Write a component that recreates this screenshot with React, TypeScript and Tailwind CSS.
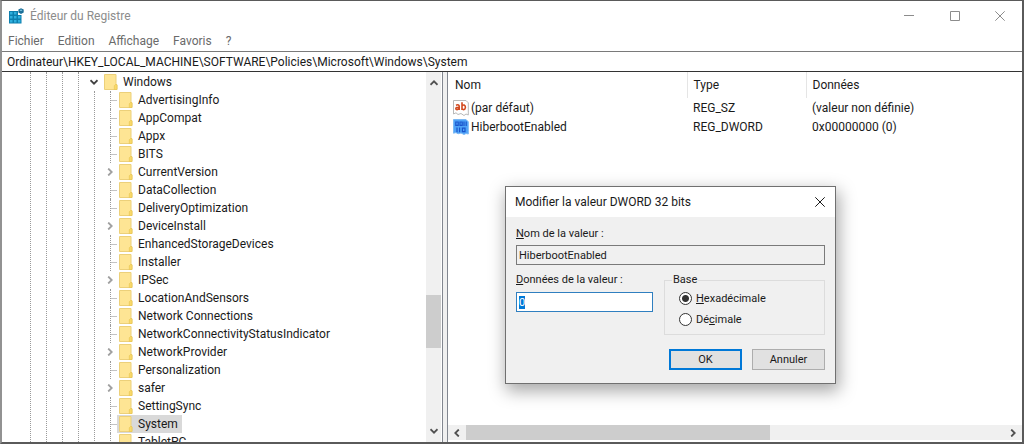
import React, { useEffect, useRef, useState } from 'react';
import clsx from 'clsx';

interface TreeKey {
  name: string;
  expandable?: boolean;
  selected?: boolean;
}

interface RegistryValue {
  name: string;
  type: string;
  data: string;
  kind: 'string' | 'binary';
}

const MENUS = ['Fichier', 'Edition', 'Affichage', 'Favoris', '?'];

const KEYS: TreeKey[] = [
  { name: 'AdvertisingInfo' },
  { name: 'AppCompat' },
  { name: 'Appx' },
  { name: 'BITS' },
  { name: 'CurrentVersion', expandable: true },
  { name: 'DataCollection' },
  { name: 'DeliveryOptimization' },
  { name: 'DeviceInstall', expandable: true },
  { name: 'EnhancedStorageDevices' },
  { name: 'Installer' },
  { name: 'IPSec', expandable: true },
  { name: 'LocationAndSensors' },
  { name: 'Network Connections' },
  { name: 'NetworkConnectivityStatusIndicator' },
  { name: 'NetworkProvider', expandable: true },
  { name: 'Personalization' },
  { name: 'safer', expandable: true },
  { name: 'SettingSync' },
  { name: 'System', selected: true },
  { name: 'TabletPC' },
];

const VALUES: RegistryValue[] = [
  { name: '(par défaut)', type: 'REG_SZ', data: '(valeur non définie)', kind: 'string' },
  { name: 'HiberbootEnabled', type: 'REG_DWORD', data: '0x00000000 (0)', kind: 'binary' },
];

const Chevron: React.FC<{ className?: string }> = ({ className }) => (
  <svg viewBox="0 0 8 8" className={clsx('size-2 fill-none stroke-current', className)} strokeWidth="1.8">
    <path d="M0.5 2.2 4 5.7 7.5 2.2" />
  </svg>
);

const Cross: React.FC = () => (
  <svg viewBox="0 0 10 10" className="size-[10px] fill-none stroke-current">
    <path d="M0.3 0.3 9.7 9.7M9.7 0.3 0.3 9.7" />
  </svg>
);

const FolderIcon: React.FC = () => (
  <svg viewBox="0 0 14 16" className="h-4 w-[14px] shrink-0">
    <path d="M0.5 0.5H12V9.5L13 11V15.5H0.5Z" fill="#fee594" stroke="#ecd07a" />
    <path d="M12 10 10.3 11.8V15.5H13V11Z" fill="#f9d968" stroke="#e6c250" strokeWidth="0.6" />
  </svg>
);

const RegeditIcon: React.FC = () => (
  <svg viewBox="0 0 16 16" className="size-4">
    <path d="M1 3H10V7H13.5V15.5H1Z" fill="#0d7fae" />
    <path d="M2 4H4.5V6.5H2ZM6 4H8.5V6.5H6ZM2 8H4.5V10.5H2ZM6 8H8.5V10.5H6ZM10 8H12.5V10.5H10ZM2 12H4.5V14.5H2ZM6 12H8.5V14.5H6ZM10 12H12.5V14.5H10Z" fill="#2fb0de" />
    <path d="M13 0.3 15.7 1.6V4.6L13 6 10.4 4.6V1.6Z" fill="#1c6f98" />
    <path d="M13 1.4 14.5 2.2 13 3.1 11.5 2.2Z" fill="#8fd4ee" />
  </svg>
);

const ValueIcon: React.FC<{ kind: RegistryValue['kind'] }> = ({ kind }) =>
  kind === 'string' ? (
    <svg viewBox="0 0 16 16" className="size-4 shrink-0">
      <path d="M0.5 0.5H13L15.3 2.8V15L13 14 11 15.5 8 13.5 5 14.5 3 12.8 0.5 14Z" fill="#fff" stroke="#b9b9b9" />
      <g fill="none" stroke="#d2491f" strokeWidth="1.6">
        <path d="M3 5.2Q6.2 4 6.2 6.5V10M6.2 7.2Q2.6 7 2.8 8.9 3.6 10.4 6.2 8.7" />
        <path d="M9 2.2V10M9 6Q10 4.7 11.3 5.1 12.6 5.8 12.4 7.6 12 9.7 10.6 9.6 9.6 9.6 9 8.6" />
      </g>
    </svg>
  ) : (
    <svg viewBox="0 0 16 16" className="size-4 shrink-0">
      <path d="M0.5 0.5H13L15.3 2.8V15L13 14.5 11 15.5 8 14 5 14.8 3 13.6 0.5 14.2Z" fill="#4fa3f7" stroke="#7ab8f5" />
      <g fill="none" stroke="#1a55cc" strokeWidth="1.2">
        <path d="M2.8 3H5.2V6.3H2.8ZM7 3H9.2V6.3H7ZM11 2.4V7M13.2 2.4V7M4 8.6V13.2M6.6 8.6V13.2M9.4 9.2H12V12.6H9.4Z" />
      </g>
    </svg>
  );

const TitleBar: React.FC = () => (
  <header className="flex h-[30px] shrink-0 items-center text-[#8c8c8c]">
    <div className="flex flex-1 items-center gap-[6px] pl-[6px]">
      <RegeditIcon />
      <h1 className="text-xs">Éditeur du Registre</h1>
    </div>
    <button aria-label="Réduire" className="flex h-full w-[46px] items-center justify-center">
      <svg viewBox="0 0 10 10" className="size-[10px] stroke-current">
        <path d="M0 4.5H10" />
      </svg>
    </button>
    <button aria-label="Agrandir" className="flex h-full w-[46px] items-center justify-center">
      <svg viewBox="0 0 10 10" className="size-[10px] fill-none stroke-current">
        <path d="M0.5 0.5H9.5V9.5H0.5Z" />
      </svg>
    </button>
    <button aria-label="Fermer" className="flex h-full w-[44px] items-center justify-center">
      <Cross />
    </button>
  </header>
);

const MenuBar: React.FC = () => (
  <nav className="flex h-[20px] shrink-0 items-center gap-[14px] pl-[6px] text-xs text-[#6a6a6a]">
    {MENUS.map((menu) => (
      <button key={menu}>{menu}</button>
    ))}
  </nav>
);

const TreeRow: React.FC<{ item: TreeKey }> = ({ item }) => (
  <li role="treeitem" aria-selected={!!item.selected} className="flex h-[18px] items-center">
    {item.expandable ? (
      <span className="-ml-1 flex w-[11px] shrink-0">
        <Chevron className="-rotate-90 text-[#a0a0a0]" />
      </span>
    ) : (
      <span className="flex h-full w-[7px] shrink-0 items-center border-l border-dotted border-[#9a9a9a]">
        <span className="w-full border-t border-[#c4c4c4]" />
      </span>
    )}
    <span className={clsx('flex h-full items-center gap-[5px] pr-1 pl-[2px] whitespace-nowrap', item.selected && 'bg-[#d9d9d9]')}>
      <FolderIcon />
      {item.name}
    </span>
  </li>
);

const KeyTree: React.FC = () => (
  <div className="flex w-[441px] shrink-0 border-r border-[#828790] pr-px">
    <div className="flex min-w-0 flex-1 overflow-hidden pl-7">
      {[0, 1, 2, 3].map((level) => (
        <span key={level} className="w-4 shrink-0 border-l border-dotted border-[#9a9a9a]" />
      ))}
      <ul role="tree" className="pt-px text-xs">
        <li role="treeitem" aria-expanded="true">
          <div className="-ml-1 flex h-[18px] items-center">
            <Chevron className="mr-[6px] text-[#404040]" />
            <FolderIcon />
            <span className="ml-[5px]">Windows</span>
          </div>
          <ul role="group" className="border-l border-dotted border-[#9a9a9a] pl-[15px]">
            {KEYS.map((item) => (
              <TreeRow key={item.name} item={item} />
            ))}
          </ul>
        </li>
      </ul>
    </div>
    <div className="flex w-[15px] shrink-0 flex-col items-center bg-[#f0f0f0] pt-[7px] pb-[7px] text-[#505050]">
      <Chevron className="rotate-180" />
      <span className="flex-[209]" />
      <span className="h-[53px] w-full bg-[#cdcdcd]" />
      <span className="flex-[79]" />
      <Chevron />
    </div>
  </div>
);

const ValueList: React.FC = () => (
  <div className="flex min-w-0 flex-1 flex-col border-l border-[#828790]">
    <div className="flex-1 overflow-hidden">
      <table className="w-full table-fixed text-left text-xs">
        <thead>
          <tr className="h-[26px]">
            <th className="w-[239px] border-r border-[#e5e5e5] pl-[7px] font-normal">Nom</th>
            <th className="w-[119px] border-r border-[#e5e5e5] pl-[6px] font-normal">Type</th>
            <th className="pl-[6px] font-normal">Données</th>
          </tr>
        </thead>
        <tbody>
          {VALUES.map((value) => (
            <tr key={value.name} className="h-[19px]">
              <td className="pl-[5px]">
                <span className="flex items-center gap-[2px]">
                  <ValueIcon kind={value.kind} />
                  {value.name}
                </span>
              </td>
              <td className="pl-[6px]">{value.type}</td>
              <td className="pl-[6px]">{value.data}</td>
            </tr>
          ))}
        </tbody>
      </table>
    </div>
    <div className="mb-[2px] flex h-[15px] shrink-0 items-center bg-[#f0f0f0] px-[5px] text-[#505050]">
      <Chevron className="rotate-90" />
      <span className="ml-[5px] h-full flex-[304] bg-[#cdcdcd]" />
      <span className="flex-[239]" />
      <Chevron className="-rotate-90" />
    </div>
  </div>
);

const radioClass =
  'size-[13px] shrink-0 appearance-none rounded-full border border-[#333] bg-white checked:bg-[radial-gradient(circle,#333_3px,#fff_4px)]';

const EditDwordDialog: React.FC = () => {
  const [data, setData] = useState('0');
  const [base, setBase] = useState('hex');
  const inputRef = useRef<HTMLInputElement>(null);

  useEffect(() => {
    inputRef.current?.focus();
    inputRef.current?.select();
  }, []);

  return (
    <form
      role="dialog"
      aria-labelledby="dialog-title"
      onSubmit={(e) => e.preventDefault()}
      className="absolute top-[185px] left-[503px] w-[331px] border border-[#707070] bg-[#f0f0f0] text-[11px] leading-4 shadow-[2px_6px_16px_1px_rgba(0,0,0,0.35)]"
    >
      <div className="flex h-[30px] items-center justify-between bg-white pr-[10px] pl-[9px]">
        <h2 id="dialog-title" className="text-xs">Modifier la valeur DWORD 32 bits</h2>
        <button type="button" aria-label="Fermer">
          <Cross />
        </button>
      </div>
      <div className="flex flex-col px-[10px] pt-[9px] pb-[13px]">
        <label htmlFor="value-name"><u>N</u>om de la valeur :</label>
        <input
          id="value-name"
          readOnly
          value="HiberbootEnabled"
          className="mt-[3px] h-5 w-full border border-[#7a7a7a] px-[2px]"
        />
        <div className="mt-[7px] flex items-start justify-between">
          <div className="flex w-[137px] flex-col">
            <label htmlFor="value-data"><u>D</u>onnées de la valeur :</label>
            <input
              id="value-data"
              ref={inputRef}
              value={data}
              onChange={(e) => setData(e.target.value)}
              className="mt-[4px] h-5 w-full border border-[#2f7fc0] bg-white px-[2px] outline-none selection:bg-[#0078d7] selection:text-white"
            />
          </div>
          <fieldset className="h-[63px] w-[161px] border border-[#dcdcdc] pl-[14px]">
            <legend className="-ml-[7px] px-px">Base</legend>
            <label className="flex h-[21px] items-center gap-[4px]">
              <input type="radio" name="base" checked={base === 'hex'} onChange={() => setBase('hex')} className={radioClass} />
              <span><u>H</u>exadécimale</span>
            </label>
            <label className="flex h-[21px] items-center gap-[4px]">
              <input type="radio" name="base" checked={base === 'dec'} onChange={() => setBase('dec')} className={radioClass} />
              <span>Dé<u>c</u>imale</span>
            </label>
          </fieldset>
        </div>
        <div className="mt-[14px] flex justify-end gap-[10px]">
          <button type="submit" className="h-[21px] w-[73px] border-2 border-[#0078d7] bg-[#e1e1e1]">OK</button>
          <button type="button" className="h-[21px] w-[73px] border border-[#adadad] bg-[#e1e1e1]">Annuler</button>
        </div>
      </div>
    </form>
  );
};

export default function App() {
  return (
    <main className="relative flex h-screen flex-col overflow-hidden border-x-2 border-t border-b-2 border-[#5a5a5a] border-l-[#929292] bg-white font-['Roboto','Noto_Sans',sans-serif] text-[#1a1a1a]">
      <TitleBar />
      <MenuBar />
      <input
        aria-label="Adresse"
        defaultValue="Ordinateur\HKEY_LOCAL_MACHINE\SOFTWARE\Policies\Microsoft\Windows\System"
        className="h-[21px] shrink-0 border-t border-b border-t-[#7a7a7a] border-b-[#333] px-[5px] text-xs outline-none"
      />
      <div className="flex min-h-0 flex-1 gap-1 bg-[#f0f0f0] *:bg-white">
        <KeyTree />
        <ValueList />
      </div>
      <EditDwordDialog />
    </main>
  );
}
